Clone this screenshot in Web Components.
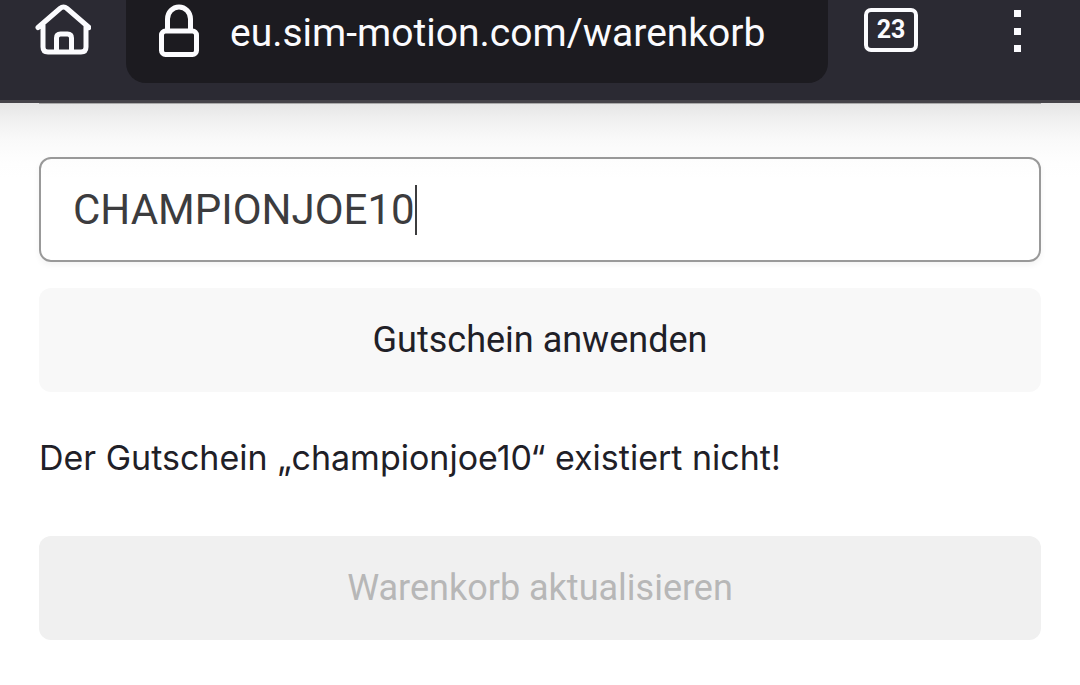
<!DOCTYPE html>
<html lang="de">
<head>
<meta charset="utf-8">
<meta name="viewport" content="width=device-width, initial-scale=1">
<title>Warenkorb</title>
<style>
	body {
		margin: 0;
		background: #fff;
		color: #1f2027;
		font-family: Roboto, "Liberation Sans", sans-serif;
	}
</style>
</head>
<body>
<browser-bar url="eu.sim-motion.com/warenkorb" tabs="23"></browser-bar>
<coupon-form>
	<coupon-field value="CHAMPIONJOE10" label="Gutscheincode"></coupon-field>
	<shop-button>Gutschein anwenden</shop-button>
	<shop-message>Der Gutschein „championjoe10“ existiert nicht!</shop-message>
	<shop-button disabled>Warenkorb aktualisieren</shop-button>
</coupon-form>

<script>
/*
Browser toolbar
*/
const templateBar = document.createElement('template');
templateBar.innerHTML = `
	<style>
		:host {
			display: block;
		}
		header {
			display: flex;
			align-items: flex-start;
			padding-bottom: 17px;
			background: #2b2a33;
			border-bottom: 3px solid #454349;
		}
		button {
			flex: none;
			display: flex;
			align-items: center;
			justify-content: center;
			width: 126px;
			height: 64px;
			padding: 0;
			border: 0;
			background: none;
			color: #fbfbfe;
			font: inherit;
		}
		svg {
			display: block;
			flex: none;
			fill: none;
			stroke: #fbfbfe;
			stroke-width: 5;
			stroke-linecap: round;
			stroke-linejoin: round;
		}
		.address {
			flex: 1;
			min-width: 0;
			display: flex;
			align-items: center;
			gap: 30px;
			padding: 0 32px 17px;
			border-radius: 0 0 20px 20px;
			background: #1c1b20;
			color: #fbfbfe;
		}
		input {
			flex: 1;
			min-width: 0;
			height: 66px;
			padding: 0;
			border: 0;
			outline: 0;
			background: none;
			color: inherit;
			font: 39px/66px Roboto, "Liberation Sans", sans-serif;
		}
		.tabs span {
			box-sizing: border-box;
			width: 54px;
			height: 44px;
			margin-bottom: 4px;
			border: 4px solid #fbfbfe;
			border-radius: 7px;
			font-size: 25px;
			font-weight: 700;
			line-height: 36px;
		}
	</style>
	<header>
		<button type="button" aria-label="Startseite">
			<svg width="56" height="64" viewBox="0 0 56 64">
				<path d="M3 27.500 L25 8.500 Q28.500 5.500 32 8.500 L54 27.500 M8 25 V47 Q8 52 13 52 H46 Q51 52 51 47 V25 M21.500 51 V38 Q21.500 34 25.500 34 H32.500 Q36.500 34 36.500 38 V51"/>
			</svg>
		</button>
		<label class="address">
			<svg width="42" height="66" viewBox="0 0 42 66">
				<path d="M9.500 30 V19 A11.500 12 0 0 1 32.500 19 V30"/>
				<rect x="3.500" y="31" width="35" height="23.500" rx="4"/>
			</svg>
			<input type="text" aria-label="Adresse">
		</label>
		<button type="button" class="tabs" aria-label="Tabs"><span></span></button>
		<button type="button" aria-label="Menü">
			<svg width="8" height="64" viewBox="0 0 8 64">
				<path fill="#fbfbfe" stroke="none" d="M1 10h7v7H1z M1 28h7v7H1z M1 45h7v7H1z"/>
			</svg>
		</button>
	</header>
`;
class BrowserBar extends HTMLElement {
	constructor() {
		super();
		this.attachShadow({ mode: 'open' });
		this.shadowRoot.appendChild(templateBar.content.cloneNode(true));
		this.shadowRoot.querySelector('input').value = this.getAttribute('url');
		this.shadowRoot.querySelector('.tabs span').textContent = this.getAttribute('tabs');
	}
}
customElements.define('browser-bar', BrowserBar);

/*
Form layout, with the toolbar's shadow at its top
*/
const templateForm = document.createElement('template');
templateForm.innerHTML = `
	<style>
		:host {
			display: block;
			padding: 0 39px 45px;
			background: linear-gradient(#e5e5e5, #f0f0f0 16px, #f9f9f9 36px, #fefefe 60px, #fff 76px) no-repeat;
		}
		form {
			display: flex;
			flex-direction: column;
			gap: 26px;
			border-top: 1px solid #aaa;
			padding-top: 53px;
		}
	</style>
	<form><slot></slot></form>
`;
class CouponForm extends HTMLElement {
	constructor() {
		super();
		this.attachShadow({ mode: 'open' });
		this.shadowRoot.appendChild(templateForm.content.cloneNode(true));
	}
}
customElements.define('coupon-form', CouponForm);

/*
Text box, the caret stands right after the typed text
*/
const templateField = document.createElement('template');
templateField.innerHTML = `
	<style>
		:host {
			display: block;
		}
		label {
			display: flex;
			align-items: center;
			padding: 26px 32px 25px;
			border: 2px solid #999;
			border-radius: 12px;
			background: linear-gradient(#fdfdfd, #fff 20px);
			box-shadow: 0 3px 6px rgba(0, 0, 0, .05);
			cursor: text;
		}
		input {
			field-sizing: content;
			min-width: 0;
			height: 50px;
			padding: 0;
			border: 0;
			outline: 0;
			background: none;
			color: #3c3c3e;
			caret-color: transparent;
			font: 42px/50px Roboto, "Liberation Sans", sans-serif;
		}
		.caret {
			width: 2px;
			height: 50px;
			background: #3c3c3e;
		}
	</style>
	<label><input type="text"><span class="caret"></span></label>
`;
class CouponField extends HTMLElement {
	constructor() {
		super();
		this.attachShadow({ mode: 'open' });
		this.shadowRoot.appendChild(templateField.content.cloneNode(true));
		const input = this.shadowRoot.querySelector('input');
		input.value = this.getAttribute('value');
		input.setAttribute('aria-label', this.getAttribute('label'));
	}
}
customElements.define('coupon-field', CouponField);

/*
Full-width button
*/
const templateButton = document.createElement('template');
templateButton.innerHTML = `
	<style>
		:host {
			display: block;
		}
		button {
			display: block;
			width: 100%;
			padding: 28px 32px;
			border: 0;
			border-radius: 12px;
			background: #f8f8f8;
			color: #1f2027;
			font: 36px/48px Roboto, "Liberation Sans", sans-serif;
		}
		button:disabled {
			background: #f0f0f0;
			color: #b7b7b7;
		}
	</style>
	<button type="button"><slot></slot></button>
`;
class ShopButton extends HTMLElement {
	constructor() {
		super();
		this.attachShadow({ mode: 'open' });
		this.shadowRoot.appendChild(templateButton.content.cloneNode(true));
		this.shadowRoot.querySelector('button').disabled = this.hasAttribute('disabled');
	}
}
customElements.define('shop-button', ShopButton);

/*
Message line
*/
const templateMessage = document.createElement('template');
templateMessage.innerHTML = `
	<style>
		:host {
			display: block;
			padding: 16px 0 28px;
			font: 34px/48px Inter, "Liberation Sans", sans-serif;
		}
		p {
			margin: 0;
		}
	</style>
	<p role="alert"><slot></slot></p>
`;
class ShopMessage extends HTMLElement {
	constructor() {
		super();
		this.attachShadow({ mode: 'open' });
		this.shadowRoot.appendChild(templateMessage.content.cloneNode(true));
	}
}
customElements.define('shop-message', ShopMessage);
</script>
</body>
</html>
